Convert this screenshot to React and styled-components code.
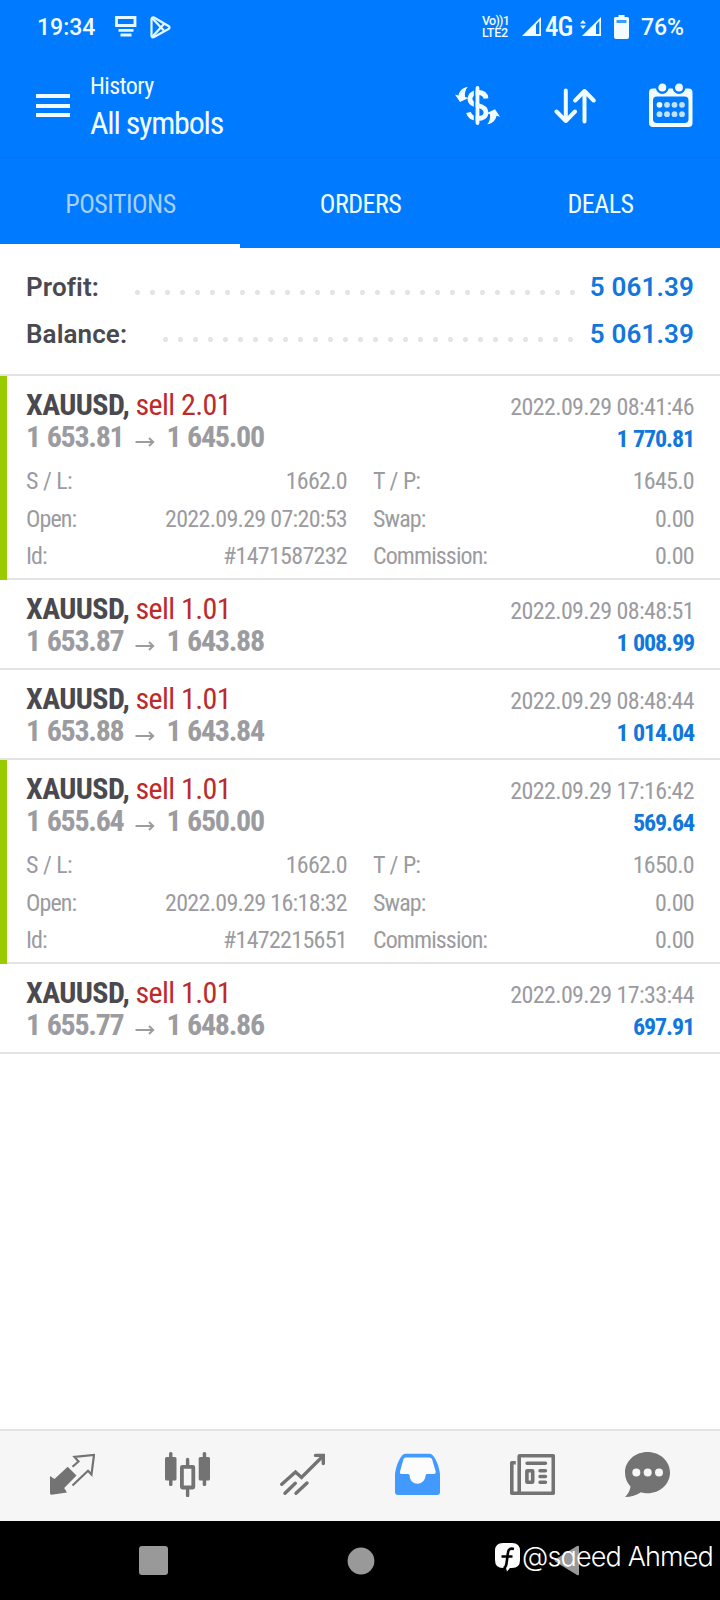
import React, { useState } from 'react';
import styled, { createGlobalStyle } from 'styled-components';

const GlobalStyle = createGlobalStyle`
  * {
    box-sizing: border-box;
  }

  body {
    margin: 0;
    background: #fff;
    font-family: 'Roboto Condensed', Roboto, sans-serif;
  }
`;

const Screen = styled.div`
  display: flex;
  flex-direction: column;
  width: 720px;
  height: 1600px;
  overflow: hidden;
  background: #fff;
`;

// Android status bar
const StatusBar = styled.div`
  display: flex;
  justify-content: space-between;
  align-items: center;
  height: 54px;
  padding: 0 36px 0 37px;
  background: #007aff;
  color: #f2fbff;
  font-family: Roboto, sans-serif;
`;

const StatusGroup = styled.div`
  display: flex;
  align-items: center;
`;

const StatusText = styled.span`
  margin-left: ${(p) => p.$left || 0}px;
  font-size: 23px;
  line-height: 27px;
  font-weight: 500;
`;

const NetworkText = styled.span`
  width: 31px;
  padding-left: 3px;
  font-size: 27px;
  line-height: 27px;
  font-family: 'Roboto Condensed', Roboto, sans-serif;
  font-weight: 500;
  letter-spacing: -0.8px;
`;

const LteBadge = styled.div`
  display: flex;
  flex-direction: column;
  width: 28px;
  margin-right: 12px;
  font-size: 12.5px;
  line-height: 12px;
  font-weight: 500;
  white-space: nowrap;
`;

const LteLine = styled.span`
  display: block;
  height: 12px;
  letter-spacing: ${(p) => p.$spacing}px;
`;

const StatusIcon = styled.svg`
  display: block;
  flex: none;
  margin-left: ${(p) => p.$left || 0}px;
`;

// App toolbar
const Toolbar = styled.header`
  display: flex;
  align-items: center;
  height: 104px;
  padding: 0 27px 0 35.5px;
  border-bottom: 1px solid #0074f0;
  background: #007aff;
  color: #f2fcff;
`;

const MenuButton = styled.button`
  display: flex;
  flex-direction: column;
  gap: 5.5px;
  width: 34px;
  padding: 0;
  border: 0;
  background: none;
`;

const MenuLine = styled.span`
  height: 4px;
  background: #f2fcff;
`;

const TitleBlock = styled.div`
  flex: 1;
  margin-left: 20.5px;
  padding-top: 2px;
`;

const Subtitle = styled.div`
  font-size: 24px;
  line-height: 32px;
  letter-spacing: -0.6px;
`;

const Title = styled.h1`
  margin: 1px 0 0;
  font-size: 32px;
  line-height: 41px;
  font-weight: 400;
  letter-spacing: -1.2px;
`;

const Actions = styled.div`
  display: flex;
  align-items: center;
  gap: 53px;
`;

const Icon = styled.svg`
  display: block;
  flex: none;
`;

// Tabs
const Tabs = styled.nav`
  display: grid;
  grid-template-columns: repeat(3, 1fr);
  height: 90px;
  background: #007aff;
`;

const Tab = styled.button`
  padding: 6px 0 0 1px;
  border: 0;
  border-bottom: 4px solid ${(p) => (p.$active ? '#fff' : '#007aff')};
  background: none;
  color: ${(p) => (p.$active ? '#a9d0fb' : '#effdff')};
  font: 400 26px/34px 'Roboto Condensed', Roboto, sans-serif;
  letter-spacing: -0.5px;
`;

// Totals
const Summary = styled.section`
  padding: 15px 26px 0;
  height: 128px;
  border-bottom: 2px solid #e3e3e3;
`;

const SummaryRow = styled.div`
  display: flex;
  align-items: center;
  height: 47px;
  font-family: Roboto, sans-serif;
  font-size: 26px;
  font-weight: 600;
`;

const SummaryLabel = styled.span`
  width: ${(p) => p.$width}px;
  color: #49494f;
  letter-spacing: 0.1px;
`;

const Dots = styled.span`
  width: ${(p) => p.$count * 15}px;
  height: 15px;
  margin-top: 12px;
  background: radial-gradient(circle, #e4e4e4 2.2px, transparent 2.9px) 0 0 / 15px 15px;
`;

const SummaryValue = styled.span`
  flex: 1;
  color: #1177dc;
  letter-spacing: 0.15px;
  text-align: right;
`;

// Deal rows
const DealRow = styled.article`
  display: flex;
  height: ${(p) => (p.$open ? 204 : 90)}px;
`;

const Marker = styled.div`
  width: 7px;
  background: ${(p) => (p.$open ? '#99cc00' : 'transparent')};
  box-shadow: ${(p) => (p.$open ? 'none' : 'inset 0 -2px #e3e3e3')};
`;

const DealBody = styled.div`
  flex: 1;
  padding: 13px 26px 0 19px;
  border-bottom: 2px solid #e3e3e3;
`;

const DealLine = styled.div`
  display: flex;
  justify-content: space-between;
  height: 32px;
  line-height: 32px;
`;

const Symbol = styled.span`
  color: #49494f;
  font-size: 30px;
  font-weight: 700;
  letter-spacing: -0.6px;
`;

const Side = styled.span`
  color: #bc2a2a;
  font-weight: 400;
`;

const Prices = styled.span`
  display: flex;
  color: #9b9ba0;
  font-size: 30px;
  font-weight: 700;
  letter-spacing: -1.3px;
  word-spacing: 1.2px;
`;

const Arrow = styled.svg`
  margin: 11px 11px 0 12px;
`;

const DealTime = styled.span`
  color: #9b9ba0;
  font-size: 24px;
  line-height: 36px;
  letter-spacing: -0.6px;
`;

const DealProfit = styled.span`
  color: #1177dc;
  font-size: 24px;
  line-height: 36px;
  font-weight: 700;
  letter-spacing: -1.1px;
  word-spacing: 1px;
`;

const Details = styled.dl`
  display: grid;
  grid-template-columns: 1fr 1fr;
  grid-auto-rows: 37.5px;
  column-gap: 26px;
  margin: 10px 0 0;
`;

const Detail = styled.div`
  display: flex;
  justify-content: space-between;
  color: #9b9ba0;
  font-size: 24px;
  line-height: 37.5px;
`;

const DetailLabel = styled.dt`
  letter-spacing: -0.9px;
  word-spacing: 0.8px;
`;

const DetailValue = styled.dd`
  margin: 0;
  letter-spacing: -0.7px;
`;

// Bottom bars
const BottomNav = styled.nav`
  display: grid;
  grid-template-columns: repeat(6, 115px);
  justify-content: center;
  height: 92px;
  margin-top: auto;
  border-top: 2px solid #e3e3e3;
  background: #f6f6f6;
`;

const NavItem = styled.button`
  display: flex;
  justify-content: center;
  padding: 21px 0 0;
  border: 0;
  background: none;
  color: ${(p) => (p.$active ? '#429aff' : '#737373')};
`;

const SystemNav = styled.div`
  position: relative;
  display: flex;
  justify-content: space-between;
  align-items: center;
  height: 79px;
  padding: 0 140.5px 0 139px;
  background: #000;
`;

const Watermark = styled.div`
  position: absolute;
  right: 7px;
  top: 20px;
  display: flex;
  gap: 2.5px;
  color: #fff;
  font-family: Inter, sans-serif;
  font-size: 27px;
  font-weight: 350;
  line-height: 32px;
  letter-spacing: -0.85px;
  font-feature-settings: 'cv11';
  white-space: nowrap;
`;

const WatermarkLogo = styled(Icon)`
  margin-top: 2px;
`;

const DollarIcon = () => (
  <Icon width="46" height="40" viewBox="455 86 46 40" fill="none">
    <path
      d="M486 98.5C485.5 94 482 92.5 478 92.5C473 92.5 470 95 470 99C470 103.5 474 104.5 478 105.5C483 106.7 486 108.5 486 112.5C486 116.5 482.5 118.5 478 118.5C472.5 118.5 469.5 116.5 468.5 112.5"
      stroke="#f2fcff"
      strokeWidth="4.8"
    />
    <path d="M474.7 86V125" stroke="#007aff" strokeWidth="1.8" />
    <path d="M477.5 88V123" stroke="#f2fcff" strokeWidth="3.8" strokeLinecap="round" />
    <g fill="#f2fcff">
      <path d="M467.7 87C462.5 87.5 459.5 91 458.5 95.5L455 94.5L460 102L468.5 98L465 97C464.5 93 465.5 89.5 467.7 87Z" />
      <path
        transform="rotate(180 477.5 105.6)"
        d="M467.7 87C462.5 87.5 459.5 91 458.5 95.5L455 94.5L460 102L468.5 98L465 97C464.5 93 465.5 89.5 467.7 87Z"
      />
    </g>
  </Icon>
);

const SortIcon = () => (
  <Icon width="42" height="36" viewBox="0 0 42 36" fill="none" stroke="#f2fcff" strokeWidth="4" strokeLinecap="round" strokeLinejoin="round">
    <path d="M11.8 2.5V33M2.5 23.5L11.8 33L21 23.5" />
    <path d="M30.5 33.5V3M21.2 12.5L30.5 3L39.7 12.5" />
  </Icon>
);

const CalendarIcon = () => (
  <Icon width="44" height="46" viewBox="0 0 44 46">
    <path
      fillRule="evenodd"
      fill="#f2fcff"
      d="M4 5.5H39.5Q43.5 5.5 43.5 9.5V40Q43.5 44 39.5 44H4Q0 44 0 40V9.5Q0 5.5 4 5.5ZM8 13.5Q4 13.5 4 17.5V36Q4 40 8 40H35.5Q39.5 40 39.5 36V17.5Q39.5 13.5 35.5 13.5Z"
    />
    {[13.3, 30].map((x) => (
      <circle key={x} cx={x} cy="4.5" r="5.2" fill="#f2fcff" stroke="#007aff" strokeWidth="2.5" />
    ))}
    {[21.8, 31.2].map((y) =>
      [10.5, 18, 25.5, 33].map((x) => (
        <circle key={`${x}-${y}`} cx={x} cy={y} r="2.9" fill={x < 11 && y < 22 ? '#f2fcff' : '#bfe3ff'} />
      ))
    )}
  </Icon>
);

const TradeIcon = () => (
  <Icon width="45" height="45" viewBox="0 0 45 45">
    <path d="M0 24L4.5 27L17.7 14.7L26.5 23.5L14.2 36L17 40.5L1.5 42.8Q0 43 0 41Z" fill="currentColor" />
    <path d="M22.5 14.8L28.5 9.5L24.5 5L44 3L41.5 22.5L38 18.8L22.5 33.5" fill="none" stroke="currentColor" strokeWidth="2.2" />
  </Icon>
);

const CandlesIcon = () => (
  <Icon width="45" height="45" viewBox="0 0 45 45" fill="currentColor">
    <rect x="0" y="5" width="11.5" height="23.5" rx="1.5" />
    <rect x="4" y="0" width="3.5" height="34" rx="1.5" />
    <rect x="33.7" y="5" width="11.3" height="23.5" rx="1.5" />
    <rect x="37.7" y="0" width="3.5" height="34" rx="1.5" />
    <path d="M22.6 7.5V14M22.6 37V43.5" stroke="currentColor" strokeWidth="3.4" strokeLinecap="round" />
    <rect x="16.9" y="14.9" width="11.4" height="20.6" rx="0.5" fill="none" stroke="currentColor" strokeWidth="3.8" />
  </Icon>
);

const ChartIcon = () => (
  <Icon width="45" height="45" viewBox="0 0 45 45" fill="none" stroke="currentColor" strokeWidth="3.4" strokeLinecap="round">
    <path d="M1.8 32.3L15.5 20L21.5 25.5L43 4" />
    <path d="M35.5 3.4H43.3V11.5" />
    <path d="M5 41.3L15.3 31.3M16 41.3L27 31" />
  </Icon>
);

const InboxIcon = () => (
  <Icon width="45" height="45" viewBox="0 0 45 45">
    <path d="M0 22C1 14 4 7 7.5 3Q9 1.7 11 1.7H34Q36 1.7 37.5 3C41 7 44 14 45 22V40Q45 43 42 43H3Q0 43 0 40Z" fill="currentColor" />
    <path
      d="M10.5 5.5H34.5Q36 5.5 37 7L40.7 19.5Q41 22 39 22H32Q30.5 22 30.5 24C30 29 26 31.7 22.5 31.7C18.5 31.7 15 29 14.7 24Q14.7 22 13 22H6.5Q4.5 22 5 19.5L8.5 7Q9 5.5 10.5 5.5Z"
      fill="#fcfcfc"
    />
  </Icon>
);

const NewsIcon = () => (
  <Icon width="45" height="45" viewBox="0 0 45 45" fill="none" stroke="currentColor" strokeWidth="3.6">
    <rect x="9.2" y="3.7" width="34.1" height="37.6" rx="0.5" />
    <path d="M5.8 10.7H1.8V41.3H9" strokeLinejoin="round" />
    <path d="M17 11.3H35.5M30 18.7H35.5M30 24.5H35.5M30 30.3H35.5" strokeWidth="3.4" strokeLinecap="round" />
    <rect x="16.9" y="18.7" width="5.8" height="11.6" rx="0.5" />
  </Icon>
);

const ChatIcon = () => (
  <Icon width="45" height="45" viewBox="0 0 45 45">
    <path
      d="M22.5 0C35 0 45 9 45 20.5C45 32 35 41.3 22.5 41.3C20 41.3 18 41 16 40.3C11.5 43.5 6 45 0 45C3 42 5 38.5 5.5 34.5C2 31 0 26 0 20.5C0 9 10 0 22.5 0Z"
      fill="currentColor"
    />
    {[11.3, 22.7, 34].map((x) => (
      <circle key={x} cx={x} cy="20.6" r="4" fill="#f6f6f6" />
    ))}
  </Icon>
);

const navItems = [
  { id: 'quotes', icon: TradeIcon },
  { id: 'charts', icon: CandlesIcon },
  { id: 'trade', icon: ChartIcon },
  { id: 'history', icon: InboxIcon },
  { id: 'news', icon: NewsIcon },
  { id: 'messages', icon: ChatIcon }
];

const deals = [
  {
    volume: '2.01', from: '1 653.81', to: '1 645.00', time: '2022.09.29 08:41:46', profit: '1 770.81',
    details: { sl: '1662.0', tp: '1645.0', open: '2022.09.29 07:20:53', id: '#1471587232' }
  },
  { volume: '1.01', from: '1 653.87', to: '1 643.88', time: '2022.09.29 08:48:51', profit: '1 008.99' },
  { volume: '1.01', from: '1 653.88', to: '1 643.84', time: '2022.09.29 08:48:44', profit: '1 014.04' },
  {
    volume: '1.01', from: '1 655.64', to: '1 650.00', time: '2022.09.29 17:16:42', profit: '569.64',
    details: { sl: '1662.0', tp: '1650.0', open: '2022.09.29 16:18:32', id: '#1472215651' }
  },
  { volume: '1.01', from: '1 655.77', to: '1 648.86', time: '2022.09.29 17:33:44', profit: '697.91' }
];

const DetailItem = ({ label, value }) => (
  <Detail>
    <DetailLabel>{label}</DetailLabel>
    <DetailValue>{value}</DetailValue>
  </Detail>
);

const Deal = ({ deal }) => (
  <DealRow $open={!!deal.details}>
    <Marker $open={!!deal.details} />
    <DealBody>
      <DealLine>
        <Symbol>
          XAUUSD, <Side>sell {deal.volume}</Side>
        </Symbol>
        <DealTime>{deal.time}</DealTime>
      </DealLine>
      <DealLine>
        <Prices>
          {deal.from}
          <Arrow width="20" height="20" viewBox="0 0 20 20" fill="none" stroke="#9b9ba0" strokeWidth="2">
            <path d="M0.5 10H18M14 6L18.2 10L14 14" />
          </Arrow>
          {deal.to}
        </Prices>
        <DealProfit>{deal.profit}</DealProfit>
      </DealLine>
      {deal.details && (
        <Details>
          <DetailItem label="S / L:" value={deal.details.sl} />
          <DetailItem label="T / P:" value={deal.details.tp} />
          <DetailItem label="Open:" value={deal.details.open} />
          <DetailItem label="Swap:" value="0.00" />
          <DetailItem label="Id:" value={deal.details.id} />
          <DetailItem label="Commission:" value="0.00" />
        </Details>
      )}
    </DealBody>
  </DealRow>
);

const App = () => {
  const [tab, setTab] = useState('POSITIONS');

  return (
    <>
      <GlobalStyle />
      <Screen>
        <StatusBar>
          <StatusGroup>
            <StatusText>19:34</StatusText>
            <StatusIcon $left={20} width="22" height="22" viewBox="0 0 22 22" fill="none" stroke="#e6f8ff" strokeWidth="2.8">
              <path d="M1.5 1.5H20V9.5H1.5ZM3.5 14.3H18.5M5.5 19H16.5" />
            </StatusIcon>
            <StatusIcon $left={13} width="22" height="23" viewBox="0 0 22 23" fill="none" stroke="#e6f8ff" strokeWidth="2.2" strokeLinejoin="round">
              <path d="M1.5 3V20Q2 22 4 21L18.5 13Q20.5 11.5 18.5 10L4 1.5Q2 1 1.5 3Z" />
              <path d="M2 2L14.5 15.3M2 21L14.5 7.5" />
            </StatusIcon>
          </StatusGroup>
          <StatusGroup>
            <LteBadge>
              <LteLine $spacing={-0.7}>Vo))1</LteLine>
              <LteLine $spacing={-0.3}>LTE2</LteLine>
            </LteBadge>
            <StatusIcon width="20" height="20" viewBox="0 0 20 20">
              <path d="M0 19L19 0V19Z" fill="#f2fbff" />
              <path d="M14 7.5L17.3 4V17H14Z" fill="#007aff" />
            </StatusIcon>
            <NetworkText>4G</NetworkText>
            <StatusIcon $left={7} width="22" height="20" viewBox="0 0 22 20">
              <path d="M2 19L21 0V19Z" fill="#f2fbff" />
              <path d="M16 7.5L19.3 4V17H16Z" fill="#007aff" />
              <path d="M0 6.5L3 3L6 6.5ZM0 8.5L3 12L6 8.5Z" fill="#f2fbff" />
            </StatusIcon>
            <StatusIcon $left={12} width="16" height="24" viewBox="0 0 16 24">
              <path d="M4.5 0H10.5V2H13.5Q15 2 15 3.5V22Q15 24 13 24H2Q0 24 0 22V3.5Q0 2 1.5 2H4.5Z" fill="#f2fbff" />
              <path d="M2.5 5H12.5V8H2.5Z" fill="#3c9cff" />
            </StatusIcon>
            <StatusText $left={11}>76%</StatusText>
          </StatusGroup>
        </StatusBar>

        <Toolbar>
          <MenuButton>
            <MenuLine />
            <MenuLine />
            <MenuLine />
          </MenuButton>
          <TitleBlock>
            <Subtitle>History</Subtitle>
            <Title>All symbols</Title>
          </TitleBlock>
          <Actions>
            <DollarIcon />
            <SortIcon />
            <CalendarIcon />
          </Actions>
        </Toolbar>

        <Tabs>
          {['POSITIONS', 'ORDERS', 'DEALS'].map((name) => (
            <Tab key={name} $active={tab === name} onClick={() => setTab(name)}>
              {name}
            </Tab>
          ))}
        </Tabs>

        <Summary>
          <SummaryRow>
            <SummaryLabel $width={104}>Profit:</SummaryLabel>
            <Dots $count={30} />
            <SummaryValue>5 061.39</SummaryValue>
          </SummaryRow>
          <SummaryRow>
            <SummaryLabel $width={132}>Balance:</SummaryLabel>
            <Dots $count={28} />
            <SummaryValue>5 061.39</SummaryValue>
          </SummaryRow>
        </Summary>

        {deals.map((deal) => (
          <Deal key={deal.time} deal={deal} />
        ))}

        <BottomNav>
          {navItems.map(({ id, icon: NavIcon }) => (
            <NavItem key={id} $active={id === 'history'}>
              <NavIcon />
            </NavItem>
          ))}
        </BottomNav>

        <SystemNav>
          <Icon width="29" height="29" viewBox="0 0 29 29">
            <rect width="29" height="29" rx="3" fill="#999" />
          </Icon>
          <Icon width="28" height="28" viewBox="0 0 28 28">
            <circle cx="14" cy="14" r="13.4" fill="#999" />
          </Icon>
          <Icon width="26" height="31" viewBox="0 0 26 31">
            <path d="M1 14.5L23 1Q25 0 25 2V29Q25 31 23 30L1 16.5Q0 15.5 1 14.5Z" fill="#999" />
          </Icon>
          <Watermark>
            <WatermarkLogo width="25" height="29" viewBox="0 0 25 29">
              <path d="M8 0H17Q25 0 25 8V17Q25 25 17 25H15L12 28.5L11 25H8Q0 25 0 17V8Q0 0 8 0Z" fill="#fff" />
              <path d="M19 6Q13.5 4.5 13 9.5L11.5 20.5Q11 24.5 8.5 25M6.5 13.5H17.5" fill="none" stroke="#000" strokeWidth="2.6" />
            </WatermarkLogo>
            @saeed Ahmed
          </Watermark>
        </SystemNav>
      </Screen>
    </>
  );
};

export default App;
